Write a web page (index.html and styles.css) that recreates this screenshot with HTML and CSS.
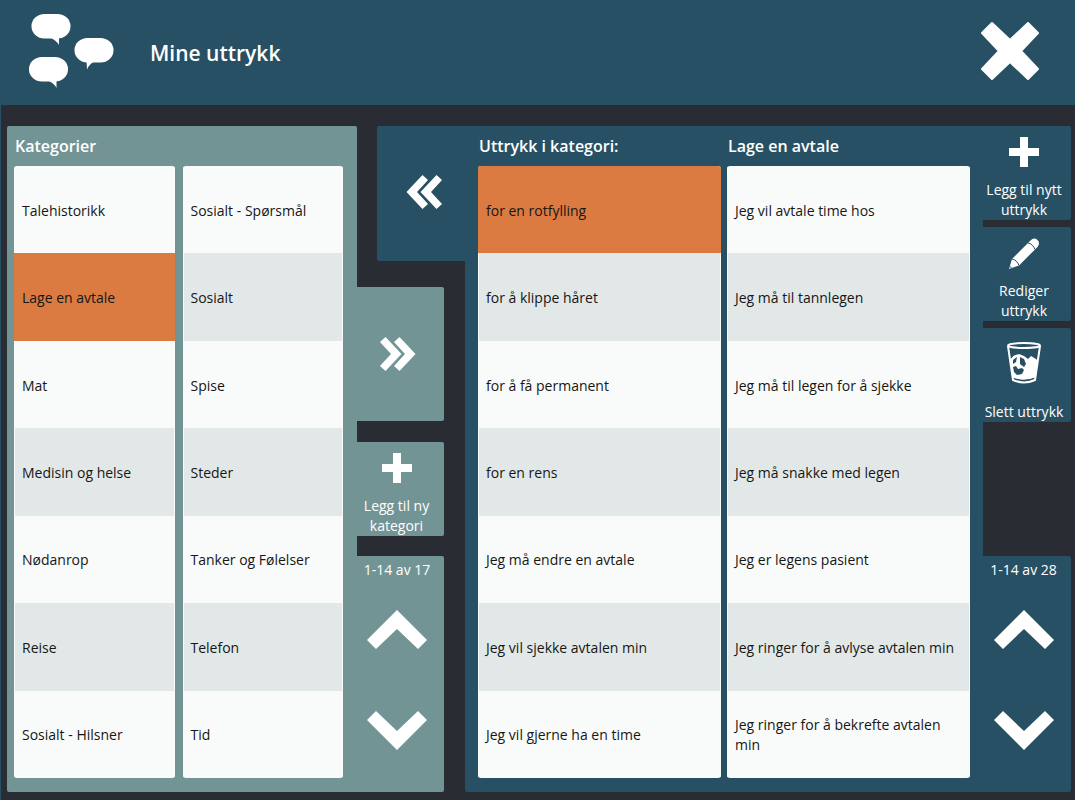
FILE: index.html
```html
<!DOCTYPE html>
<html lang="no">
<head>
    <meta charset="UTF-8">
    <meta name="viewport" content="width=device-width, initial-scale=1.0">
    <title>Mine uttrykk</title>
    <link rel="stylesheet" href="styles.css">
</head>
<body>
    <header class="header">
        <svg class="logo" width="86" height="76" viewBox="0 0 86 76" aria-hidden="true">
            <rect x="3.500" y="1" width="39" height="24.500" rx="13" ry="12"/>
            <path d="M22 24.500 Q28 27 31 32 L31 23 Z"/>
            <rect x="46.500" y="25" width="39" height="24.500" rx="13" ry="12"/>
            <path d="M58.500 47 L59 56.500 Q61 51 67 48 Z"/>
            <rect x="1" y="44" width="39" height="24.500" rx="13" ry="12"/>
            <path d="M20 67.500 Q26 70 28.500 75 L28.500 66 Z"/>
        </svg>
        <h1>Mine uttrykk</h1>
        <button class="close" type="button" aria-label="Lukk">
            <svg width="60" height="60" viewBox="0 0 60 60"><path d="M12 2 L30 19 L48 2 L58 12 L41 30 L58 48 L48 58 L30 41 L12 58 L2 48 L19 30 L2 12 Z"/></svg>
        </button>
    </header>

    <main class="board">
        <!-- Kategorier -->
        <section class="pane categories">
            <h2>Kategorier</h2>
            <ul class="list">
                <li><button type="button">Talehistorikk</button></li>
                <li><button type="button" class="selected">Lage en avtale</button></li>
                <li><button type="button">Mat</button></li>
                <li><button type="button">Medisin og helse</button></li>
                <li><button type="button">Nødanrop</button></li>
                <li><button type="button">Reise</button></li>
                <li><button type="button">Sosialt - Hilsner</button></li>
            </ul>
            <ul class="list">
                <li><button type="button">Sosialt - Spørsmål</button></li>
                <li><button type="button">Sosialt</button></li>
                <li><button type="button">Spise</button></li>
                <li><button type="button">Steder</button></li>
                <li><button type="button">Tanker og Følelser</button></li>
                <li><button type="button">Telefon</button></li>
                <li><button type="button">Tid</button></li>
            </ul>
        </section>

        <button class="tab move-left" type="button" aria-label="Flytt til venstre">
            <svg width="36" height="34" viewBox="0 0 36 34">
                <path d="M0.500 17 L16.500 0 L22 5 L11 17 L22 29 L16.500 34 Z"/>
                <path class="front" d="M14.500 17 L30.500 0 L36 5 L25 17 L36 29 L30.500 34 Z"/>
            </svg>
        </button>
        <button class="tab move-right" type="button" aria-label="Flytt til høyre">
            <svg width="36" height="34" viewBox="0 0 36 34">
                <path class="front" d="M14 5 L19.500 0 L35.500 17 L19.500 34 L14 29 L25 17 Z"/>
                <path class="front" d="M0 5 L5.500 0 L21.500 17 L5.500 34 L0 29 L11 17 Z"/>
            </svg>
        </button>

        <button class="tool add-category" type="button">
            <svg width="30" height="30" viewBox="0 0 30 30"><path d="M11 0 H19 V11 H30 V19 H19 V30 H11 V19 H0 V11 H11 Z"/></svg>
            <span>Legg til ny kategori</span>
        </button>

        <div class="pager category-pager">
            <p>1-14 av 17</p>
            <button type="button" aria-label="Forrige side">
                <svg width="60" height="40" viewBox="0 0 60 40"><path d="M0 30 L30 0 L60 30 L51 39 L30 19 L9 39 Z"/></svg>
            </button>
            <button type="button" aria-label="Neste side">
                <svg width="60" height="40" viewBox="0 0 60 40"><path d="M0 10 L9 1 L30 21 L51 1 L60 10 L30 40 Z"/></svg>
            </button>
        </div>

        <!-- Uttrykk -->
        <section class="pane phrases">
            <h2>Uttrykk i kategori:</h2>
            <h2>Lage en avtale</h2>
            <ul class="list">
                <li><button type="button" class="selected">for en rotfylling</button></li>
                <li><button type="button">for å klippe håret</button></li>
                <li><button type="button">for å få permanent</button></li>
                <li><button type="button">for en rens</button></li>
                <li><button type="button">Jeg må endre en avtale</button></li>
                <li><button type="button">Jeg vil sjekke avtalen min</button></li>
                <li><button type="button">Jeg vil gjerne ha en time</button></li>
            </ul>
            <ul class="list">
                <li><button type="button">Jeg vil avtale time hos</button></li>
                <li><button type="button">Jeg må til tannlegen</button></li>
                <li><button type="button">Jeg må til legen for å sjekke</button></li>
                <li><button type="button">Jeg må snakke med legen</button></li>
                <li><button type="button">Jeg er legens pasient</button></li>
                <li><button type="button">Jeg ringer for å avlyse avtalen min</button></li>
                <li><button type="button">Jeg ringer for å bekrefte avtalen min</button></li>
            </ul>
        </section>

        <div class="toolbar">
            <button class="tool" type="button">
                <svg width="30" height="30" viewBox="0 0 30 30"><path d="M11 0 H19 V11 H30 V19 H19 V30 H11 V19 H0 V11 H11 Z"/></svg>
                <span>Legg til nytt uttrykk</span>
            </button>
            <button class="tool" type="button">
                <svg width="30" height="31" viewBox="0 0 30 31">
                    <path d="M0 31 L3 21 L21.500 2.500 Q25 -1 28.500 2 Q31.500 5 28.500 9 L10 27.500 Z"/>
                    <path class="line" d="M3 21 Q8 22 10 27.500 M19 5 Q24 6 26 11.500 M0.500 28 L3 30.500"/>
                </svg>
                <span>Rediger uttrykk</span>
            </button>
            <button class="tool bin" type="button">
                <svg width="34" height="42" viewBox="0 0 34 42">
                    <ellipse class="outline" cx="17" cy="3.500" rx="16" ry="2.500"/>
                    <path class="outline" d="M1 4 L6 38 Q17 43 28 38 L33 4"/>
                    <path class="outline" d="M5.500 34 Q17 39 28.500 34"/>
                    <path d="M3.500 17 L7 13.500 L12 12 L17 14 L21 17 L24 14 L29 17 L31 19 L29 35 Q17 39.500 6 35.500 Z"/>
                    <path class="hole" d="M6 18 L10 15 L9 20 L6 22 Z M13 15 L17 17 L19 22 L17 25 L13 22 Z M6 25 L9 24 L11 27 L15 26 L17 28 L15 32 L10 33 L7 30 Z"/>
                </svg>
                <span>Slett uttrykk</span>
            </button>
        </div>

        <div class="pager phrase-pager">
            <p>1-14 av 28</p>
            <button type="button" aria-label="Forrige side">
                <svg width="60" height="40" viewBox="0 0 60 40"><path d="M0 30 L30 0 L60 30 L51 39 L30 19 L9 39 Z"/></svg>
            </button>
            <button type="button" aria-label="Neste side">
                <svg width="60" height="40" viewBox="0 0 60 40"><path d="M0 10 L9 1 L30 21 L51 1 L60 10 L30 40 Z"/></svg>
            </button>
        </div>
    </main>
</body>
</html>
```
FILE: styles.css
```css
:root {
    --bg: #2a2c34;
    --blue: #285064;
    --teal: #739495;
    --orange: #db7b42;
    --row: #f9fbfa;
    --row-alt: #e2e8e8;
}

* {
    margin: 0;
    padding: 0;
    box-sizing: border-box;
}

body {
    font-family: 'Segoe UI', 'Open Sans', sans-serif;
    font-size: 14px;
    line-height: 20px;
    background: var(--bg);
    color: #fff;
    min-height: 100vh;
    display: flex;
    flex-direction: column;
}

button {
    font: inherit;
    color: inherit;
    background: none;
    border: none;
    cursor: pointer;
}

svg {
    display: block;
    flex: none;
    fill: #fff;
}

/* Header */
.header {
    display: flex;
    align-items: center;
    height: 105px;
    padding: 0 35px 4px 28px;
    background: var(--blue);
}

.header h1 {
    flex: 1;
    margin-left: 36px;
    padding-top: 4px;
    font-size: 21px;
    line-height: 28px;
    font-weight: 600;
}

.close path {
    stroke: #fff;
    stroke-width: 2;
    stroke-linejoin: round;
}

/* Board */
.board {
    flex: 1;
    display: grid;
    grid-template-columns: minmax(0, 350fr) 20px 67px 21px minmax(0, 518fr) 88px;
    grid-template-rows: 135px 26px 134px 21px 94px 20px 1fr;
    padding: 21px 4px 8px 6px;
    border-left: 1px solid var(--blue);
}

.pane {
    display: grid;
    grid-template-columns: 1fr 1fr;
    grid-template-rows: 40px 1fr;
    grid-row: 1 / -1;
}

.pane h2 {
    padding: 0 1px;
    font-size: 16px;
    line-height: 40px;
    font-weight: 600;
}

.categories {
    grid-column: 1;
    column-gap: 8px;
    padding: 0 14px 14px 7px;
    background: var(--teal);
    border-radius: 2px 2px 0 2px;
}

.phrases {
    grid-column: 5;
    column-gap: 6px;
    padding: 0 13px 14px;
    background: var(--blue);
    border-radius: 0 0 0 2px;
}

.list {
    grid-row: 2;
    display: flex;
    flex-direction: column;
    list-style: none;
    color: #161616;
    background: var(--row);
    border-radius: 3px;
    overflow: hidden;
}

.list li {
    flex: 1;
    display: flex;
}

.list button {
    flex: 1;
    padding: 2px 7px 0;
    text-align: left;
    border: solid var(--row);
    border-width: 0 1px;
}

.list li:nth-child(even) button {
    background: var(--row-alt);
}

.list li .selected,
.list li:nth-child(even) .selected {
    background: var(--orange);
    border-color: var(--orange);
}

/* Flytteknapper */
.tab {
    display: flex;
    align-items: center;
    justify-content: center;
}

.tab .front {
    stroke-width: 3;
    paint-order: stroke;
}

.move-left {
    grid-column: 3 / 5;
    grid-row: 1;
    padding: 0 0 4px 6px;
    background: var(--blue);
    border-radius: 2px 0 0 2px;
}

.move-left .front {
    stroke: var(--blue);
}

.move-right {
    grid-column: 2 / 4;
    grid-row: 3;
    padding-right: 6px;
    background: var(--teal);
    border-radius: 0 2px 2px 0;
}

.move-right .front {
    stroke: var(--teal);
}

/* Verktøy */
.tool {
    display: flex;
    flex-direction: column;
    align-items: center;
    justify-content: space-between;
    height: 94px;
    padding: 11px 6px 0 0;
    background: var(--blue);
    border-radius: 0 2px 2px 0;
}

.tool .line {
    fill: none;
    stroke: var(--blue);
}

.tool .outline {
    fill: none;
    stroke: #fff;
    stroke-width: 2;
}

.tool .hole {
    fill: var(--blue);
}

.bin {
    padding-top: 14px;
}

.add-category {
    grid-column: 2 / 4;
    grid-row: 5;
    padding-right: 8px;
    background: var(--teal);
}

.toolbar {
    grid-column: 6;
    grid-row: 1 / 6;
    display: flex;
    flex-direction: column;
    gap: 7px;
}

.pager {
    grid-row: 7;
    display: flex;
    flex-direction: column;
    align-items: center;
    padding-top: 4px;
    border-radius: 0 2px 2px 0;
}

.pager button {
    display: flex;
    align-items: center;
    justify-content: center;
    width: 100%;
    height: 100px;
}

.category-pager {
    grid-column: 2 / 4;
    padding-right: 7px;
    background: var(--teal);
}

.phrase-pager {
    grid-column: 6;
    padding-right: 7px;
    background: var(--blue);
}
```
